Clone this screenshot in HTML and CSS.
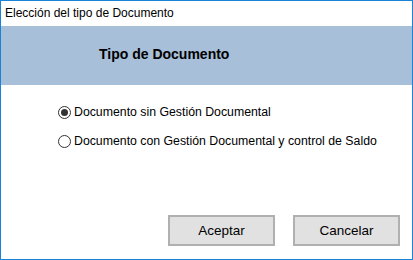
FILE: index.html
```html
<!DOCTYPE html>
<html lang="es">
<head>
    <meta charset="UTF-8">
    <title>Elección del tipo de Documento</title>
    <link rel="stylesheet" href="styles.css">
</head>
<body>
    <div class="window">
        <div class="titlebar">Elección del tipo de Documento</div>

        <div class="banner">
            <h1>Tipo de Documento</h1>
        </div>

        <div class="options">
            <label class="option">
                <span class="radio checked"></span>
                <span>Documento sin Gestión Documental</span>
            </label>
            <label class="option">
                <span class="radio"></span>
                <span>Documento con Gestión Documental y control de Saldo</span>
            </label>
        </div>

        <div class="actions">
            <button class="btn">Aceptar</button>
            <button class="btn">Cancelar</button>
        </div>
    </div>
</body>
</html>
```

FILE: styles.css
```css
* {
    margin: 0;
    padding: 0;
    box-sizing: border-box;
    font-family: "Liberation Sans", Arial, sans-serif;
}

body {
    width: 413px;
    height: 260px;
    background: #ffffff;
    color: #000000;
    overflow: hidden;
}

/* Window frame */
.window {
    width: 413px;
    height: 260px;
    border: 1px solid #1883d7;
    display: flex;
    flex-direction: column;
}

.titlebar {
    height: 25px;
    padding-left: 4px;
    font-size: 12px;
    line-height: 25px;
}

/* Header band */
.banner {
    height: 59px;
    background: #a8bfd9;
    display: flex;
    align-items: center;
    padding: 0 0 3px 98px;
}

.banner h1 {
    font-size: 14px;
    font-weight: bold;
}

/* Radio options */
.options {
    display: flex;
    flex-direction: column;
    gap: 16px;
    padding: 21px 0 0 57px;
}

.option {
    display: flex;
    align-items: center;
    gap: 3px;
    height: 13px;
    font-size: 12.3px;
    line-height: 13px;
}

.radio {
    width: 13px;
    height: 13px;
    border: 1px solid #333333;
    border-radius: 50%;
    display: flex;
    align-items: center;
    justify-content: center;
}

.radio.checked::after {
    content: "";
    width: 7px;
    height: 7px;
    border-radius: 50%;
    background: #333333;
}

/* Buttons */
.actions {
    margin-top: auto;
    display: flex;
    justify-content: flex-end;
    gap: 18px;
    padding: 0 12px 13px 0;
}

.btn {
    width: 107px;
    height: 31px;
    background: #e1e1e1;
    border: 2px solid #b0b0b0;
    font-size: 13.5px;
    color: #000000;
}
```
